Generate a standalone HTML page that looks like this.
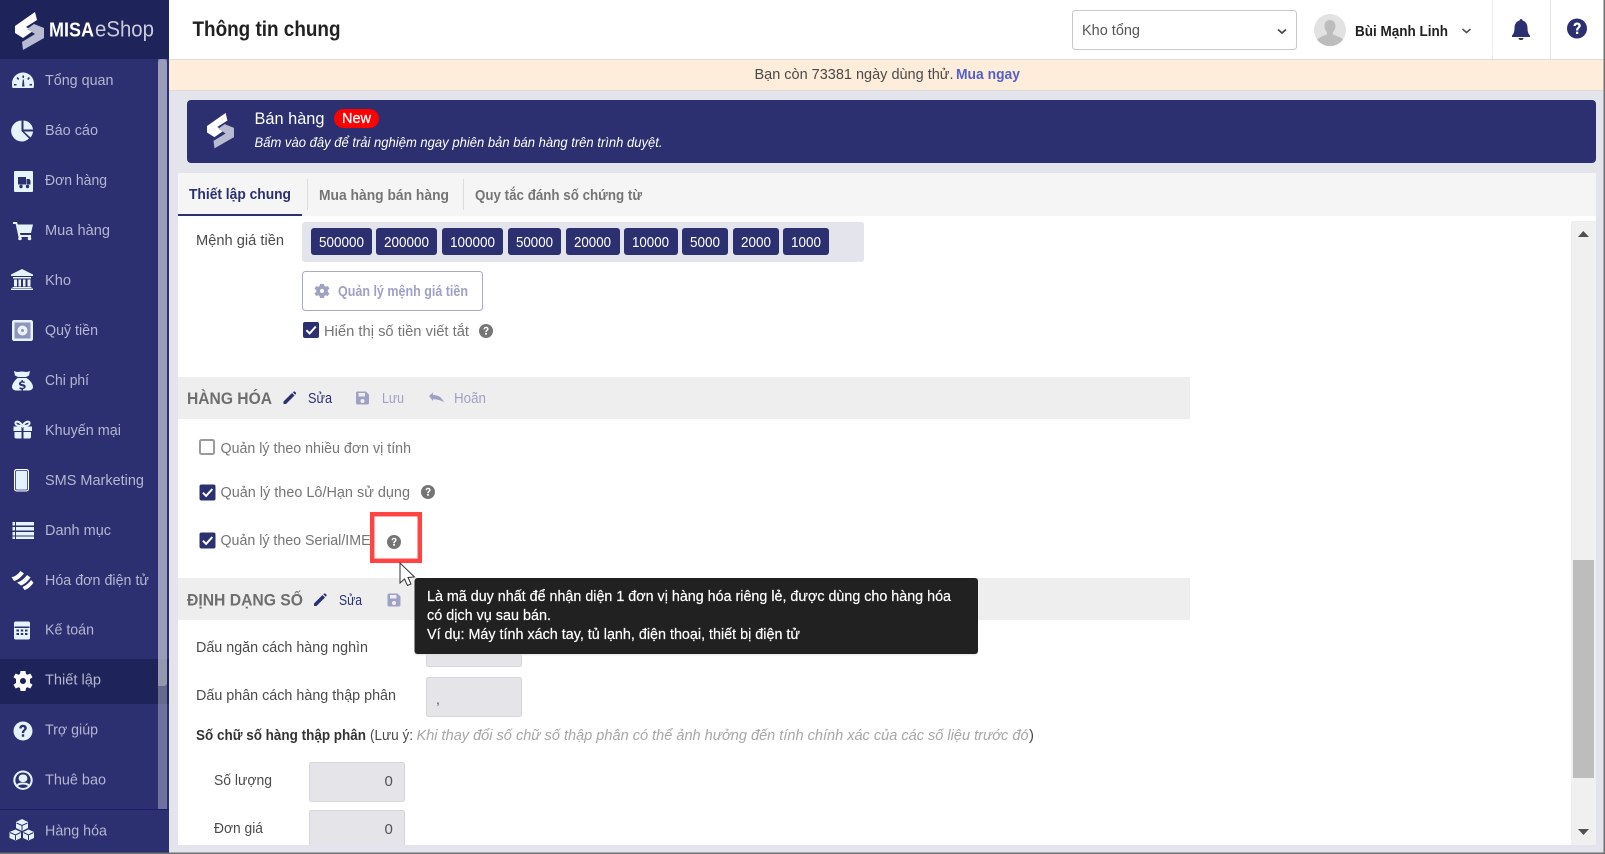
<!DOCTYPE html>
<html lang="vi"><head><meta charset="utf-8"><title>Thông tin chung</title>
<style>
html,body{margin:0;padding:0;background:#e4e5ec;overflow:hidden}
svg{display:block;font-family:"Liberation Sans",Arial,sans-serif}
.m{font-size:15px;fill:#b4b6d2}
.t{font-size:15px;fill:#757575}
.d{font-size:15px;fill:#4a4a4a}
.ic{fill:#e6f3fd}
.w{fill:#fff}
.tip{font-size:14.5px;fill:#fff;stroke:#fff;stroke-width:.2}
</style></head><body>
<svg width="1605" height="854" viewBox="0 0 1605 854" xmlns="http://www.w3.org/2000/svg">
<defs>
<g id="help"><circle r="7" fill="#757575"/><path d="M-2.4-1.8C-2.4-3.4-1.2-4.2 0-4.2 1.5-4.2 2.6-3.2 2.6-2 2.6-.4.8-.3.8 1.2H-.8C-.8-.9 1-.8 1-2 1-2.6.5-3 0-3-.6-3-1-2.5-1-1.8Z" fill="#fff"/><rect x="-.9" y="2" width="1.8" height="1.7" fill="#fff"/></g>
<g id="chk"><rect x="0" y="0" width="16" height="16" rx="2" fill="#2c3070"/><path d="M3.4 8.2 6.6 11.4 12.8 4.6" fill="none" stroke="#fff" stroke-width="2"/></g>
<g id="mark"><path d="M0 14 20 0 22 8 11 15 18 19 8 26 0 21Z" fill="#fff"/><path d="M29 16V26L8 38 7 30 20 22 12 17 19 12Z" fill="#b9bbd3"/></g>
<path id="pen" d="M0 12V9.5L8.5 1 11 3.500 2.500 12ZM9.300.3 10 -.3C10.500-.7 11-.7 11.500-.3L12.300.5C12.700 1 12.700 1.500 12.300 2L11.700 2.700Z"/>
<path id="save" d="M0 1.500C0 .7.7 0 1.500 0H10L13 3V11.500C13 12.300 12.300 13 11.500 13H1.500C.7 13 0 12.300 0 11.500ZM2.500 1.500V5H9V1.500ZM6.500 7.500A2 2 0 1 0 6.500 11.500 2 2 0 1 0 6.500 7.500Z" fill-rule="evenodd"/>
</defs>

<!-- page bg -->
<rect width="1605" height="854" fill="#e4e5ec"/>

<!-- sidebar -->
<rect x="0" y="0" width="169" height="854" fill="#2c3070"/>
<rect x="0" y="0" width="169" height="59" fill="#1e2459"/>
<rect x="0" y="659" width="169" height="45" fill="#1e2459"/>
<rect x="0" y="809" width="169" height="1" fill="#1f1a70"/>
<rect x="158" y="59" width="9" height="750" fill="#fff" opacity=".32"/>
<path d="M158 686V63C158 60.800 160 59 162.500 59S167 60.800 167 63V683C167 685 165 686 163 686Z" fill="#fff" opacity=".3"/>

<!-- logo -->
<use href="#mark" x="15" y="12"/>
<text x="49" y="36.500" font-size="20" font-weight="bold" fill="#fff" textLength="45" lengthAdjust="spacingAndGlyphs">MISA</text>
<text x="95" y="36.500" font-size="22" fill="#c9cadd" textLength="59" lengthAdjust="spacingAndGlyphs">eShop</text>

<!-- menu text -->
<text class="m" x="45" y="85" textLength="68.500" lengthAdjust="spacingAndGlyphs">Tổng quan</text>
<text class="m" x="45" y="135" textLength="53" lengthAdjust="spacingAndGlyphs">Báo cáo</text>
<text class="m" x="45" y="185" textLength="62" lengthAdjust="spacingAndGlyphs">Đơn hàng</text>
<text class="m" x="45" y="235" textLength="65" lengthAdjust="spacingAndGlyphs">Mua hàng</text>
<text class="m" x="45" y="285" textLength="26" lengthAdjust="spacingAndGlyphs">Kho</text>
<text class="m" x="45" y="335" textLength="53" lengthAdjust="spacingAndGlyphs">Quỹ tiền</text>
<text class="m" x="45" y="385" textLength="44" lengthAdjust="spacingAndGlyphs">Chi phí</text>
<text class="m" x="45" y="435" textLength="76" lengthAdjust="spacingAndGlyphs">Khuyến mại</text>
<text class="m" x="45" y="485" textLength="99" lengthAdjust="spacingAndGlyphs">SMS Marketing</text>
<text class="m" x="45" y="535" textLength="66" lengthAdjust="spacingAndGlyphs">Danh mục</text>
<text class="m" x="45" y="585" textLength="104" lengthAdjust="spacingAndGlyphs">Hóa đơn điện tử</text>
<text class="m" x="45" y="634.500" textLength="49" lengthAdjust="spacingAndGlyphs">Kế toán</text>
<text class="m" x="45" y="684.500" textLength="56" lengthAdjust="spacingAndGlyphs">Thiết lập</text>
<text class="m" x="45" y="734.500" textLength="53" lengthAdjust="spacingAndGlyphs">Trợ giúp</text>
<text class="m" x="45" y="784.500" textLength="61" lengthAdjust="spacingAndGlyphs">Thuê bao</text>
<text class="m" x="45" y="835.500" textLength="62" lengthAdjust="spacingAndGlyphs">Hàng hóa</text>

<!-- menu icons -->
<g class="ic">
<!-- gauge -->
<path fill-rule="evenodd" d="M12.500 88C12 86.500 12 85 12 83.500 12 77.500 17 72.500 23 72.500S34 77.500 34 83.500C34 85 34 86.500 33.500 88ZM22.500 75.500h1.500v2.500h-1.500ZM16.500 78l1.200-1 1.600 2-1.200 1ZM28.800 77l1.200 1-1.700 2-1.200-1ZM14 84h2.500v1.500H14ZM29.500 84H32v1.500h-2.500ZM22 86.500h2.500L23.800 79.500h-1Z"/>
<!-- pie -->
<path d="M21.500 120.500V131L29 138.500A10.500 10.500 0 1 1 21.500 120.500Z"/><path d="M23.500 120.500A10 10 0 0 1 33 129.500H23.500Z"/><path d="M24 131.500H33C32.800 134 31.800 136 30.500 137.500Z"/>
<!-- order -->
<rect x="14" y="171" width="19" height="21" rx="1"/>
<path d="M18 177h8v7.500h-8ZM26.500 179h3l1 2v3.500h-4Z" fill="#2c3070"/><circle cx="21" cy="186.500" r="1.700" fill="#2c3070"/><circle cx="27.500" cy="186.500" r="1.700" fill="#2c3070"/>
<!-- cart -->
<path d="M13 222h4l.8 2.500H33l-2 8.500H20l.4 2H31v2H18.500L15.700 224H13Z"/><circle cx="20" cy="238.500" r="1.800"/><circle cx="29.500" cy="238.500" r="1.800"/>
<!-- bank -->
<path d="M22 269 33 274.500V276H11V274.500Z"/><path d="M13 277h18v1.500H13ZM14 279.500h3v7h-3ZM18.500 279.500h2.500v7h-2.500ZM23 279.500h2.500v7H23ZM27.500 279.500h3v7h-3ZM12.500 287h19v1H12.500ZM11 288.500h22v1.500H11Z"/>
<!-- safe -->
<rect x="14" y="322" width="17" height="17" fill="#8f94bd"/>
<path fill-rule="evenodd" d="M14 320H31C32.100 320 33 320.900 33 322V339C33 340.100 32.100 341 31 341H14C12.900 341 12 340.100 12 339V322C12 320.900 12.900 320 14 320ZM14.500 322.500V338.500H30.500V322.500Z"/><path fill-rule="evenodd" d="M22.500 325.500A5 5 0 1 0 22.500 335.500 5 5 0 1 0 22.500 325.500ZM22.500 329A1.500 1.500 0 1 1 22.500 332 1.500 1.500 0 1 1 22.500 329Z"/>
<!-- money bags -->
<path d="M14 371l3 1 5-.5 5 .5 3-1-1 4.500-3 1.500h-8l-3-1.500Z"/><path fill-rule="evenodd" d="M17.500 378h9C30 380 33 384 33 387c0 2-2 3.500-4 3.500H16c-2 0-4-1.500-4-3.500 0-3 3-7 5.500-9ZM21.500 380v1.300c-1.500.3-2.500 1.200-2.500 2.400 0 3 4.800 1.800 4.800 3.400 0 1-2.800 1-4 .2l-.6 1.300c.6.400 1.400.7 2.300.8V390.500h1.500v-1.400c1.600-.3 2.700-1.200 2.700-2.500 0-3-4.800-1.900-4.800-3.300 0-1 2.300-.8 3.500-.2l.5-1.300c-.6-.3-1.300-.5-2-.6V380Z"/>
<!-- gift -->
<path d="M13.500 426.500H21.500V431H13.500ZM23.500 426.500H32V431H23.500ZM14.500 432H21.500V438.500H16C15.200 438.500 14.500 437.800 14.500 437ZM23.500 432H31V437C31 437.800 30.300 438.500 29.500 438.500H23.500Z"/><path fill="none" stroke="#e6f3fd" stroke-width="2" d="M22.500 426C20 421 15 420.500 15.500 423.500 15.800 425.500 19 426 22.500 426 26 426 29.200 425.500 29.500 423.500 30 420.500 25 421 22.500 426Z"/>
<!-- phone -->
<rect x="14.500" y="469.500" width="14" height="21.500" rx="2" fill="#e3f2fd" stroke="#fff" stroke-width="1"/><rect x="15.500" y="470.500" width="12" height="19.500" rx="1.500" fill="none" stroke="#2c3070" stroke-width=".8"/>
<!-- list -->
<path d="M12.500 522h2.500v3.500h-2.500ZM16 522h18v3.500H16ZM12.500 527h2.500v3.500h-2.500ZM16 527h18v3.500H16ZM12.500 532h2.500v3.500h-2.500ZM16 532h18v3.500H16ZM12.500 536.500h2.500v2.500h-2.500ZM16 536.500h18v2.500H16Z"/>
<!-- invoice -->
<path d="M11.500 577C15 577 18 574 20.500 571L24 573.500C21 577 18 580 14 581ZM17 582.500C21 581.500 25 578 27 575L30.500 577.500C28 581 25 584 21 585.500ZM22.500 587C26 585.500 29 583 31 580L33.500 582.500C32 585.500 28 589 24.500 590Z" fill="#fff"/>
<!-- calculator -->
<path fill-rule="evenodd" d="M15.500 621.500H28.500C29.300 621.500 30 622.200 30 623V638C30 638.800 29.300 639.500 28.500 639.500H15.500C14.700 639.500 14 638.800 14 638V623C14 622.200 14.700 621.500 15.500 621.500ZM14.500 626.500V628H29.500V626.500ZM16.500 629.500V631.500H19V629.500ZM20.800 629.500V631.500H23.200V629.500ZM25 629.500V631.500H27.500V629.500ZM16.500 633V635H19V633ZM20.800 633V635H23.200V633ZM25 633V635H27.500V633Z"/>
<!-- gear -->
<path fill="#fff" fill-rule="evenodd" d="M20.500 671H25.500L26 674 27.500 674.800 30.300 673.500 32.500 677.200 30 679 30 683 32.500 684.800 30.300 688.500 27.500 687.200 26 688 25.500 691H20.500L20 688 18.500 687.200 15.700 688.500 13.500 684.800 16 683V679L13.500 677.200 15.700 673.500 18.500 674.800 20 674ZM23 678A3 3 0 1 0 23 684 3 3 0 1 0 23 678Z"/>
<!-- help -->
<circle cx="23" cy="731" r="9.500" fill="#e6f3fd"/><path d="M19.300 728.500C19.300 726 21 724.800 23 724.800 25.200 724.800 26.800 726.200 26.800 728 26.800 730.500 24.200 730.500 24.200 733H21.800C21.800 729.800 24.300 729.900 24.300 728.200 24.300 727.500 23.700 727 23 727 22.200 727 21.600 727.600 21.600 728.500ZM21.800 734.200H24.200V736.700H21.800Z" fill="#2c3070"/>
<!-- user -->
<path fill-rule="evenodd" d="M23 770.500A9.700 9.700 0 1 0 23 789.900 9.700 9.700 0 1 0 23 770.500ZM23 772.500A7.700 7.700 0 0 1 29.300 784.500C28 783 25.800 782.500 23 782.500S18 783 16.700 784.500A7.700 7.700 0 0 1 23 772.500ZM23 774.500A3.800 3.800 0 1 0 23 782 3.800 3.800 0 1 0 23 774.500ZM18 786C19 785 21 784.500 23 784.500S27 785 28 786C26.700 787.300 25 788 23 788S19.300 787.300 18 786Z" fill="#e6f3fd"/>
<!-- cubes -->
<path d="M22 819 28 822V828L22 831 16 828V822ZM15.500 829.500 21 832V838L15.500 840.500 9.500 838V832ZM28.500 829.500 34 832V838L28.500 840.500 23 838V832Z"/>
<path d="M16.500 823 22 825.500 27.500 823M22 825.500V830.500M10 832.500 15.500 835 20.500 832.500M15.500 835V840M23.500 832.500 28.500 835 33.500 832.500M28.500 835V840" stroke="#2c3070" stroke-width="1" fill="none"/>
</g>

<!-- header -->
<rect x="169" y="0" width="1436" height="59" fill="#fff"/>
<rect x="169" y="59" width="1436" height="1" fill="#dcdcdc"/>
<text x="192.500" y="36" font-size="21" font-weight="bold" fill="#212121" textLength="148" lengthAdjust="spacingAndGlyphs">Thông tin chung</text>
<rect x="1072.500" y="10.500" width="224" height="39" rx="3" fill="#fff" stroke="#c9c9c9"/>
<text x="1082" y="35" font-size="15" fill="#555" textLength="58" lengthAdjust="spacingAndGlyphs">Kho tổng</text>
<path d="M1278 29.500 1282 33 1286 29.500" fill="none" stroke="#444" stroke-width="1.600"/>
<circle cx="1330" cy="30" r="16" fill="#e2e2e2"/>
<path d="M1330 20C1326.500 20 1324.500 22.500 1324.500 26 1324.500 29 1326 31 1327 32.500V34.500C1323 36 1319 37.500 1317 39.500A16 16 0 0 0 1343 39.500C1341 37.500 1337 36 1333 34.500V32.500C1334 31 1335.500 29 1335.500 26 1335.500 22.500 1333.500 20 1330 20Z" fill="#bdbdbd"/>
<text x="1355" y="36" font-size="15" font-weight="bold" fill="#212121" textLength="93" lengthAdjust="spacingAndGlyphs">Bùi Mạnh Linh</text>
<path d="M1462.500 29 1466.500 32.500 1470.500 29" fill="none" stroke="#555" stroke-width="1.600"/>
<rect x="1492" y="0" width="1" height="59" fill="#efefef"/>
<rect x="1550" y="0" width="1" height="59" fill="#e4e4e4"/>
<path d="M1521 19C1522 19 1522.500 19.800 1522.500 20.500 1526 21.500 1527.500 24.500 1527.500 28 1527.500 32 1528.500 34 1530 35.500V37H1512V35.500C1513.500 34 1514.500 32 1514.500 28 1514.500 24.500 1516 21.500 1519.500 20.500 1519.500 19.800 1520 19 1521 19ZM1518.500 38H1523.500C1523.500 39.500 1522.300 40 1521 40S1518.500 39.500 1518.500 38Z" fill="#2c3070"/>
<circle cx="1577" cy="28.500" r="10" fill="#2c3070"/>
<path d="M1573.500 26C1573.500 23.700 1575.200 22.500 1577.100 22.500 1579.300 22.500 1580.800 23.900 1580.800 25.600 1580.800 28 1578.300 28 1578.300 30.500H1576C1576 27.400 1578.400 27.400 1578.400 25.800 1578.400 25.100 1577.800 24.600 1577.100 24.600 1576.300 24.600 1575.800 25.200 1575.800 26ZM1576 31.600H1578.300V34H1576Z" fill="#fff"/>

<!-- trial bar -->
<rect x="169" y="60" width="1436" height="30" fill="#ffeddb"/>
<rect x="169" y="90" width="1436" height="1" fill="#dedcd8"/>
<text x="754.500" y="79" font-size="14.500" fill="#4a4a4a" textLength="199" lengthAdjust="spacingAndGlyphs">Bạn còn 73381 ngày dùng thử.</text>
<text x="956" y="79" font-size="14.500" font-weight="bold" fill="#5561c9" textLength="64" lengthAdjust="spacingAndGlyphs">Mua ngay</text>

<!-- promo -->
<rect x="187" y="100" width="1409" height="63" rx="4" fill="#2c3070"/>
<use href="#mark" transform="translate(207 113) scale(.93)"/>
<text x="254.500" y="124" font-size="17" fill="#fff" textLength="70" lengthAdjust="spacingAndGlyphs">Bán hàng</text>
<rect x="334" y="109" width="45" height="19" rx="9.500" fill="#f00"/>
<text x="342" y="123" font-size="15" fill="#fff" stroke="#fff" stroke-width=".3" textLength="29" lengthAdjust="spacingAndGlyphs">New</text>
<text x="254.500" y="147" font-size="14" font-style="italic" fill="#fff" textLength="408" lengthAdjust="spacingAndGlyphs">Bấm vào đây để trải nghiệm ngay phiên bản bán hàng trên trình duyệt.</text>

<!-- tabs -->
<rect x="178" y="173" width="1418" height="43" fill="#f5f5f6"/>
<rect x="178" y="214" width="124" height="2" fill="#2c3070"/>
<rect x="307" y="179" width="1" height="31" fill="#dcdcdc"/>
<rect x="463" y="179" width="1" height="31" fill="#dcdcdc"/>
<text x="189" y="199" font-size="15" font-weight="bold" fill="#2c3070" textLength="102" lengthAdjust="spacingAndGlyphs">Thiết lập chung</text>
<text x="319" y="200" font-size="15" font-weight="bold" fill="#757575" textLength="130" lengthAdjust="spacingAndGlyphs">Mua hàng bán hàng</text>
<text x="475" y="200" font-size="15" font-weight="bold" fill="#757575" textLength="167" lengthAdjust="spacingAndGlyphs">Quy tắc đánh số chứng từ</text>

<!-- content -->
<rect x="178" y="216" width="1418" height="629" fill="#fff"/>
<!-- scrollbar -->
<rect x="1571" y="221" width="25" height="624" fill="#f0f0f0"/>
<rect x="1573" y="560" width="21" height="218" fill="#bdbdbd"/>
<path d="M1583.300 231 1578 237H1589Z" fill="#505050"/>
<path d="M1578 829H1589L1583.500 835Z" fill="#505050"/>

<!-- mệnh giá -->
<text class="d" x="196" y="245" textLength="88" lengthAdjust="spacingAndGlyphs">Mệnh giá tiền</text>
<rect x="302" y="222" width="562" height="40" rx="3" fill="#e4e5ec"/>
<g fill="#2c3070">
<rect x="311" y="228" width="61" height="27" rx="3"/><rect x="376" y="228" width="61" height="27" rx="3"/><rect x="442" y="228" width="61" height="27" rx="3"/><rect x="508" y="228" width="53" height="27" rx="3"/><rect x="566" y="228" width="54" height="27" rx="3"/><rect x="624" y="228" width="54" height="27" rx="3"/><rect x="682" y="228" width="46" height="27" rx="3"/><rect x="733" y="228" width="46" height="27" rx="3"/><rect x="783" y="228" width="46" height="27" rx="3"/>
</g>
<g font-size="15" fill="#fff">
<text x="319" y="247" textLength="45" lengthAdjust="spacingAndGlyphs">500000</text>
<text x="384" y="247" textLength="45" lengthAdjust="spacingAndGlyphs">200000</text>
<text x="450" y="247" textLength="45" lengthAdjust="spacingAndGlyphs">100000</text>
<text x="516" y="247" textLength="37" lengthAdjust="spacingAndGlyphs">50000</text>
<text x="574" y="247" textLength="37" lengthAdjust="spacingAndGlyphs">20000</text>
<text x="632" y="247" textLength="37" lengthAdjust="spacingAndGlyphs">10000</text>
<text x="690" y="247" textLength="30" lengthAdjust="spacingAndGlyphs">5000</text>
<text x="741" y="247" textLength="30" lengthAdjust="spacingAndGlyphs">2000</text>
<text x="791" y="247" textLength="30" lengthAdjust="spacingAndGlyphs">1000</text>
</g>
<rect x="302.500" y="271.500" width="180" height="39" rx="3" fill="#fff" stroke="#a7a9c9"/>
<path fill="#a0a2c4" fill-rule="evenodd" d="M320 284H324L324.500 286 325.800 286.800 327.800 286 329.500 288.600 327.800 290V292L329.500 293.400 327.800 296 325.800 295.200 324.500 296 324 298H320L319.500 296 318.200 295.200 316.200 296 314.500 293.400 316.200 292V290L314.500 288.600 316.200 286 318.200 286.800 319.500 286ZM322 289A2 2 0 1 0 322 293 2 2 0 1 0 322 289Z"/>
<text x="338" y="296" font-size="15" font-weight="bold" fill="#9fa1c4" textLength="130" lengthAdjust="spacingAndGlyphs">Quản lý mệnh giá tiền</text>
<use href="#chk" x="303" y="322"/>
<text class="t" x="324" y="336" textLength="145" lengthAdjust="spacingAndGlyphs">Hiển thị số tiền viết tắt</text>
<use href="#help" x="486" y="331"/>

<!-- Hàng hóa -->
<rect x="178" y="377" width="1012" height="42" fill="#eee"/>
<text x="187" y="404" font-size="17" font-weight="bold" fill="#6e6e6e" textLength="85" lengthAdjust="spacingAndGlyphs">HÀNG HÓA</text>
<use href="#pen" x="283.500" y="392" fill="#2c3070"/>
<text x="308" y="403" font-size="15" fill="#2c3070" textLength="24" lengthAdjust="spacingAndGlyphs">Sửa</text>
<use href="#save" x="356" y="391.500" fill="#9fa1c4"/>
<text x="382" y="403" font-size="15" fill="#9fa1c4" textLength="22" lengthAdjust="spacingAndGlyphs">Lưu</text>
<path d="M429 396 433 392.500V395C438.500 395 442 397.500 444 402.500 441 400.500 438 399.300 433 399.300V401Z" fill="#9fa1c4"/>
<text x="454" y="403" font-size="15" fill="#9fa1c4" textLength="32" lengthAdjust="spacingAndGlyphs">Hoãn</text>

<rect x="200" y="440" width="14" height="14" rx="1.500" fill="#fff" stroke="#9a9a9a" stroke-width="2"/>
<text class="t" x="220.500" y="453" textLength="190.500" lengthAdjust="spacingAndGlyphs">Quản lý theo nhiều đơn vị tính</text>
<use href="#chk" x="199.500" y="484.500"/>
<text class="t" x="220.500" y="497" textLength="189.500" lengthAdjust="spacingAndGlyphs">Quản lý theo Lô/Hạn sử dụng</text>
<use href="#help" x="428" y="492"/>
<use href="#chk" x="199.500" y="532.500"/>
<text class="t" x="220.500" y="545" textLength="154" lengthAdjust="spacingAndGlyphs">Quản lý theo Serial/IMEI</text>
<use href="#help" x="394" y="542"/>

<!-- Định dạng số -->
<rect x="178" y="578" width="1012" height="42" fill="#eee"/>
<text x="187" y="605.500" font-size="17" font-weight="bold" fill="#6e6e6e" textLength="116" lengthAdjust="spacingAndGlyphs">ĐỊNH DẠNG SỐ</text>
<use href="#pen" x="314" y="594" fill="#2c3070"/>
<text x="339" y="605" font-size="15" fill="#2c3070" textLength="23" lengthAdjust="spacingAndGlyphs">Sửa</text>
<use href="#save" x="387.500" y="593.500" fill="#9fa1c4"/>

<text class="d" x="196" y="652" textLength="172" lengthAdjust="spacingAndGlyphs">Dấu ngăn cách hàng nghìn</text>
<rect x="426.500" y="627.500" width="95" height="39" rx="2" fill="#e4e4e9" stroke="#d5d6dc"/>
<text class="d" x="196" y="700" textLength="200" lengthAdjust="spacingAndGlyphs">Dấu phân cách hàng thập phân</text>
<rect x="426.500" y="677.500" width="95" height="39" rx="2" fill="#e4e4e9" stroke="#d5d6dc"/>
<text x="436" y="704" font-size="14" fill="#555">,</text>
<text x="196" y="740" font-size="15" font-weight="bold" fill="#333" textLength="170" lengthAdjust="spacingAndGlyphs">Số chữ số hàng thập phân</text>
<text x="370" y="740" font-size="15" fill="#4a4a4a" textLength="43" lengthAdjust="spacingAndGlyphs">(Lưu ý:</text>
<text x="416.500" y="740" font-size="15" font-style="italic" fill="#a6a6a6" textLength="612" lengthAdjust="spacingAndGlyphs">Khi thay đổi số chữ số thập phân có thể ảnh hưởng đến tính chính xác của các số liệu trước đó</text>
<text x="1029" y="740" font-size="15" fill="#4a4a4a">)</text>

<text class="d" x="214" y="785" textLength="58" lengthAdjust="spacingAndGlyphs">Số lượng</text>
<rect x="309.500" y="762.500" width="95" height="39" rx="2" fill="#e4e4e9" stroke="#d5d6dc"/>
<text x="384.500" y="786" font-size="15" fill="#555">0</text>
<text class="d" x="214" y="833" textLength="49" lengthAdjust="spacingAndGlyphs">Đơn giá</text>
<rect x="309.500" y="810.500" width="95" height="39" rx="2" fill="#e4e4e9" stroke="#d5d6dc"/>
<text x="384.500" y="834" font-size="15" fill="#555">0</text>

<!-- bottom -->
<rect x="169" y="845" width="1436" height="9" fill="#e4e5ec"/>
<rect x="0" y="852.500" width="1605" height="1.500" fill="#707070"/>
<rect x="1603.500" y="0" width="1.500" height="854" fill="#707070"/>

<!-- red box -->
<rect x="372.200" y="514.200" width="47.600" height="46.600" fill="none" stroke="#ff4444" stroke-width="4.500"/>

<!-- tooltip -->
<rect x="414.500" y="578" width="563.500" height="76" rx="3" fill="#e0e0e0" opacity=".6" transform="translate(0 1.500)"/>
<rect x="414.500" y="578" width="563.500" height="76" rx="3" fill="#212121"/>
<text class="tip" x="427" y="601" textLength="524" lengthAdjust="spacingAndGlyphs">Là mã duy nhất để nhận diện 1 đơn vị hàng hóa riêng lẻ, được dùng cho hàng hóa</text>
<text class="tip" x="427" y="620" textLength="124" lengthAdjust="spacingAndGlyphs">có dịch vụ sau bán.</text>
<text class="tip" x="427" y="639" textLength="373" lengthAdjust="spacingAndGlyphs">Ví dụ: Máy tính xách tay, tủ lạnh, điện thoại, thiết bị điện tử</text>

<!-- cursor -->
<path d="M400 563V583L404.500 579 407.500 585.500 411 584 408 577.500 414.500 577Z" fill="#fff" stroke="#333" stroke-width="1"/>
</svg>
</body></html>
